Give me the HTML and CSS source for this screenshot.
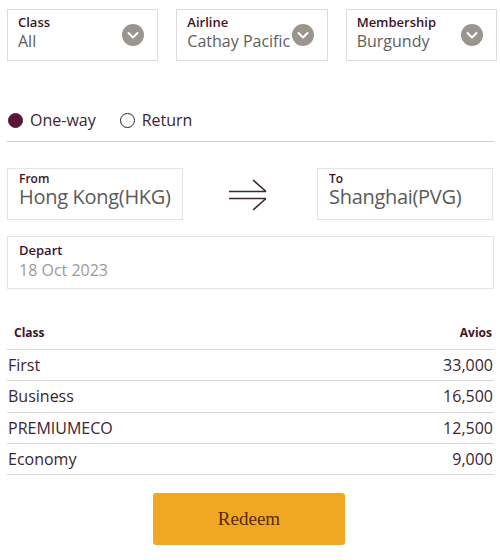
FILE: index.html
```html
<!DOCTYPE html>
<html>
<head>
<meta charset="utf-8">
<link rel="stylesheet" href="styles.css">
</head>
<body>
<div class="page">
  <div class="selects">
    <div class="select">
      <div class="sel-text">
        <div class="label">Class</div>
        <div class="value">All</div>
      </div>
      <span class="chev"><svg width="22" height="22" viewBox="0 0 22 22"><circle cx="11" cy="11" r="11" fill="#9b958d"/><path d="M6.5 9 L11 13.5 L15.5 9" fill="none" stroke="#fff" stroke-width="2" stroke-linecap="round" stroke-linejoin="round"/></svg></span>
    </div>
    <div class="select">
      <div class="sel-text">
        <div class="label">Airline</div>
        <div class="value">Cathay Pacific</div>
      </div>
      <span class="chev"><svg width="22" height="22" viewBox="0 0 22 22"><circle cx="11" cy="11" r="11" fill="#9b958d"/><path d="M6.5 9 L11 13.5 L15.5 9" fill="none" stroke="#fff" stroke-width="2" stroke-linecap="round" stroke-linejoin="round"/></svg></span>
    </div>
    <div class="select">
      <div class="sel-text">
        <div class="label">Membership</div>
        <div class="value">Burgundy</div>
      </div>
      <span class="chev"><svg width="22" height="22" viewBox="0 0 22 22"><circle cx="11" cy="11" r="11" fill="#9b958d"/><path d="M6.5 9 L11 13.5 L15.5 9" fill="none" stroke="#fff" stroke-width="2" stroke-linecap="round" stroke-linejoin="round"/></svg></span>
    </div>
  </div>

  <div class="radios">
    <label class="radio"><span class="dot on"></span>One-way</label>
    <label class="radio"><span class="dot"></span>Return</label>
  </div>

  <div class="route">
    <div class="field place">
      <div class="label small">From</div>
      <div class="value big">Hong Kong(HKG)</div>
    </div>
    <div class="arrow">
      <svg width="40" height="36" viewBox="0 0 40 36"><path d="M1 15.5 H38 M1 22.5 H38 M25 4 L38 15.5 M25 34 L38 22.5" fill="none" stroke="#3d2a30" stroke-width="1.6"/></svg>
    </div>
    <div class="field place">
      <div class="label small">To</div>
      <div class="value big">Shanghai(PVG)</div>
    </div>
  </div>

  <div class="field depart">
    <div class="label">Depart</div>
    <div class="value light">18 Oct 2023</div>
  </div>

  <table class="avios">
    <thead>
      <tr><th class="l">Class</th><th class="r">Avios</th></tr>
    </thead>
    <tbody>
      <tr><td>First</td><td class="r">33,000</td></tr>
      <tr><td>Business</td><td class="r">16,500</td></tr>
      <tr><td>PREMIUMECO</td><td class="r">12,500</td></tr>
      <tr><td>Economy</td><td class="r">9,000</td></tr>
    </tbody>
  </table>

  <div class="actions">
    <button class="redeem">Redeem</button>
  </div>
</div>
</body>
</html>
```

FILE: styles.css
```css
* { box-sizing: border-box; }
body {
  margin: 0;
  background: #fff;
  font-family: "Open Sans", "Noto Sans", sans-serif;
  color: #3b2029;
}
.page {
  padding: 9px 3px 0 7px;
}
.selects {
  display: flex;
  gap: 18px;
}
.select {
  flex: 1;
  height: 52px;
  border: 1px solid #dcdcdc;
  display: flex;
  align-items: center;
  justify-content: space-between;
  padding: 0 13px 0 10px;
}
.sel-text { margin-top: -4px; }
.label {
  font-size: 13px;
  font-weight: 600;
  color: #3d1426;
  line-height: 16px;
}
.value {
  font-size: 16px;
  color: #5e5e5e;
  line-height: 22px;
}
.chev { display: flex; }
.radios {
  display: flex;
  gap: 24px;
  margin-top: 48px;
  margin-right: 3px;
  padding: 0 0 10px 1px;
  border-bottom: 1px solid #cfcfcf;
}
.radio {
  display: flex;
  align-items: center;
  gap: 7px;
  font-size: 16px;
  color: #3d2430;
}
.dot {
  width: 15px;
  height: 15px;
  border-radius: 50%;
  border: 1.5px solid #2e2226;
}
.dot.on {
  background: #5a1634;
  border-color: #5a1634;
}
.route {
  display: flex;
  align-items: center;
  justify-content: space-between;
  margin-top: 26px;
  margin-right: 4px;
}
.field {
  border: 1px solid #e4e4e4;
}
.place {
  width: 176px;
  height: 52px;
  padding: 3px 0 0 11px;
}
.label.small { font-size: 12px; line-height: 14px; }
.value.big {
  font-size: 20px;
  line-height: 20px;
  margin-top: 1px;
  color: #5a5a5a;
  letter-spacing: -0.3px;
}
.arrow { display: flex; margin-right: 4px; }
.depart {
  margin-top: 16px;
  margin-right: 3px;
  height: 53px;
  padding: 5px 0 0 11px;
}
.depart .label { font-size: 13px; }
.value.light { color: #9a9a9a; margin-top: 1px; }
.avios {
  width: calc(100% - 3px);
  border-collapse: collapse;
  margin-top: 35px;
}
.avios th {
  font-size: 12px;
  font-weight: 700;
  color: #3d1426;
  padding: 0 2px 8px 7px;
  border-bottom: 1px solid #d9d9d9;
}
.avios th.l { text-align: left; }
.avios th.r { text-align: right; }
.avios td {
  font-size: 16px;
  color: #3d2430;
  height: 31.3px;
  padding: 0 1px 0 1px;
  border-bottom: 1px solid #d9d9d9;
}
.avios td.r { text-align: right; }
.actions {
  display: flex;
  justify-content: center;
  margin-top: 18px;
  margin-right: 6px;
}
.redeem {
  width: 192px;
  height: 52px;
  border: none;
  border-radius: 3px;
  background: #f0a823;
  color: #5c2a0e;
  font-family: "Liberation Serif", "DejaVu Serif", serif;
  font-size: 19px;
}
```
